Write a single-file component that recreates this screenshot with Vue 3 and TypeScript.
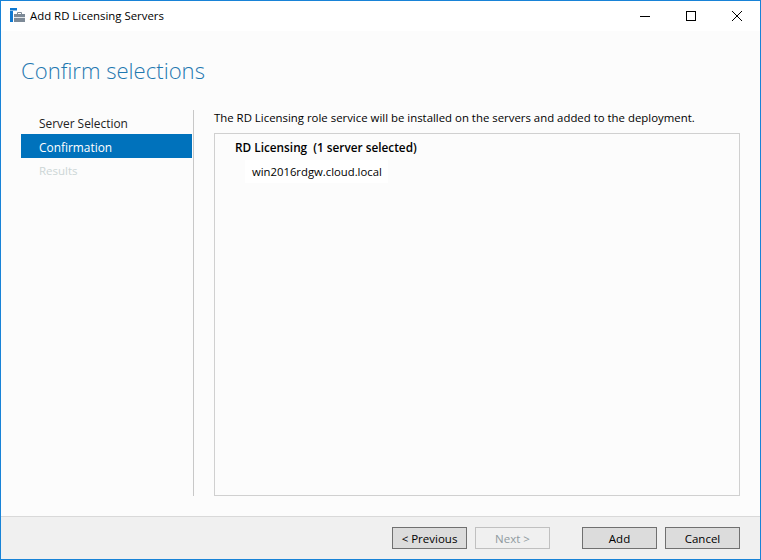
<script setup lang="ts">
const steps = [
  { label: 'Server Selection', state: 'done' },
  { label: 'Confirmation', state: 'active' },
  { label: 'Results', state: 'disabled' },
]
</script>

<template>
  <div class="window">
    <header class="titlebar">
      <svg class="app-icon" width="15" height="14" viewBox="0 0 15 14">
        <rect x="0" y="0" width="7" height="2.5" fill="#0f78d0" />
        <rect x="0" y="3" width="3" height="11" fill="#0f78d0" />
        <rect x="4" y="6" width="11" height="8" fill="#7d8a97" />
        <rect x="4" y="9" width="11" height="1" fill="#e3e7ea" />
        <path d="M7.5 6V4.5h4V6" fill="none" stroke="#7d8a97" />
      </svg>
      <span class="title">Add RD Licensing Servers</span>
      <div class="controls">
        <span class="ctrl">
          <svg width="12" height="12" viewBox="0 0 12 12"><path d="M1 6.5h10" stroke="#000" fill="none" /></svg>
        </span>
        <span class="ctrl">
          <svg width="12" height="12" viewBox="0 0 12 12"><rect x="1.5" y="1.5" width="9" height="9" stroke="#000" fill="none" /></svg>
        </span>
        <span class="ctrl">
          <svg width="12" height="12" viewBox="0 0 12 12"><path d="M1 1l10 10M11 1L1 11" stroke="#000" fill="none" /></svg>
        </span>
      </div>
    </header>

    <div class="body">
      <h1 class="heading">Confirm selections</h1>
      <div class="columns">
        <nav class="sidebar">
          <div v-for="s in steps" :key="s.label" class="step" :class="s.state">{{ s.label }}</div>
        </nav>
        <main class="main">
          <p class="intro">The RD Licensing role service will be installed on the servers and added to the deployment.</p>
          <section class="box">
            <div class="group">RD Licensing&nbsp; (1 server selected)</div>
            <div class="server">win2016rdgw.cloud.local</div>
          </section>
        </main>
      </div>
    </div>

    <footer class="footer">
      <button class="btn">&lt; Previous</button>
      <button class="btn off" disabled>Next &gt;</button>
      <button class="btn gap">Add</button>
      <button class="btn">Cancel</button>
    </footer>
  </div>
</template>

<style>
html, body { margin: 0; background: #fff; }
</style>

<style scoped>
.window {
  width: 761px;
  height: 560px;
  box-sizing: border-box;
  border: 1px solid #1883d7;
  display: flex;
  flex-direction: column;
  font-family: "Open Sans", "Noto Sans", sans-serif;
  font-size: 12px;
  color: #000;
  background: #fcfcfc;
  overflow: hidden;
}
.titlebar {
  height: 30px;
  flex: none;
  background: #fff;
  display: flex;
  align-items: center;
  padding-left: 9px;
}
.app-icon { flex: none; margin: 0 5px 2px 0; }
.title { font-size: 11.4px; margin-bottom: 2px; }
.controls { margin-left: auto; display: flex; }
.ctrl {
  width: 46px;
  height: 30px;
  display: flex;
  align-items: center;
  justify-content: center;
}
.body {
  flex: 1;
  min-height: 0;
  display: flex;
  flex-direction: column;
  padding: 0 20px;
}
.heading {
  margin: 24px 0 0;
  height: 55px;
  font-size: 22.1px;
  font-weight: 300;
  line-height: 30px;
  color: #1f78b0;
}
.columns { display: flex; height: 386px; }
.sidebar {
  width: 171px;
  margin-right: 1px;
  flex: none;
}
.step {
  height: 24px;
  box-sizing: border-box;
  padding: 3px 0 0 18px;
  line-height: 20px;
  font-size: 11.9px;
}
.step.done { color: #222; }
.step.active { background: #0072bc; color: #fff; }
.step.disabled { color: #ccd6d6; font-size: 11.5px; }
.main {
  flex: 1;
  border-left: 1px solid #c8c8c8;
  padding-left: 20px;
  display: flex;
  flex-direction: column;
}
.intro { margin: 0; height: 23px; line-height: 15px; font-size: 11.4px; }
.box {
  flex: 1;
  border: 1px solid #d0d0d0;
  padding: 5px 20px;
}
.group { font-weight: 600; line-height: 16px; height: 21px; color: #000; font-size: 11.8px; }
.server {
  width: fit-content;
  margin-left: 10px;
  padding: 4px 6px 3px 7px;
  line-height: 16px;
  color: #000;
  background: #fff;
  font-size: 11.3px;
}
.footer {
  height: 43px;
  flex: none;
  box-sizing: border-box;
  background: #f0f0f0;
  border-top: 1px solid #d9d9d9;
  display: flex;
  align-items: flex-start;
  justify-content: flex-end;
  gap: 8px;
  padding: 10px 20px 0 0;
}
.btn {
  width: 75px;
  height: 22px;
  box-sizing: border-box;
  border: 1px solid #707070;
  background: #dcdcdc;
  font: inherit;
  font-size: 11.5px;
  color: #000;
  padding: 1px 0 0;
  line-height: 18px;
}
.btn.off { border-color: #c0c0c0; background: #f0f0f0; color: #8f9a9f; }
.btn.gap { margin-left: 24px; }
</style>
